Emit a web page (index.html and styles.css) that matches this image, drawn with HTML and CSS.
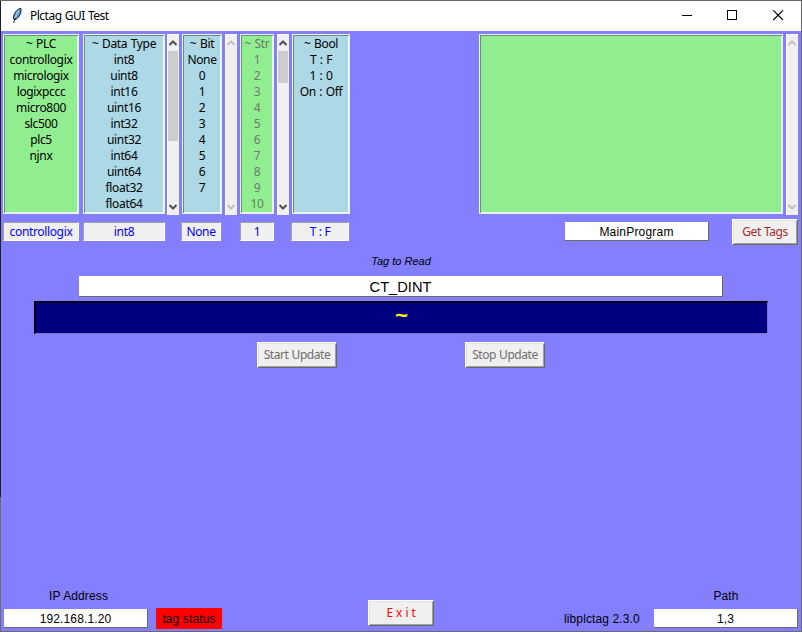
FILE: index.html
```html
<!DOCTYPE html>
<html lang="en">
<head>
<meta charset="utf-8">
<title>Plctag GUI Test</title>
<link rel="stylesheet" href="styles.css">
</head>
<body>
<div class="window">
  <header class="titlebar">
    <svg class="feather" width="12" height="18" viewBox="0 0 12 18">
      <path d="M9.800 1.200C5.500 2.500 2.600 6.500 2.400 11.500L3.600 13C7.400 11.500 11 6.500 9.800 1.200Z" fill="#5b93cc" stroke="#15191f" stroke-width="1"/>
      <path d="M8.300 3.200C6.300 5.200 5 8 4.400 10.600" fill="none" stroke="#a5d3f7" stroke-width="1.300"/>
      <path d="M4.400 11C3.600 12.600 3 14.200 2.600 16" fill="none" stroke="#20242b" stroke-width="1"/>
    </svg>
    <h1 class="title">Plctag GUI Test</h1>
    <svg class="controls" width="104" height="12" viewBox="0 0 104 12" fill="none" stroke="#000" stroke-width="1">
      <path d="M0 5.500H10M45.500 .5H54.500V9.500H45.500Z" shape-rendering="crispEdges"/>
      <path d="M91.300 .3L101 10M101 .3L91.300 10" stroke-width="1.100"/>
    </svg>
  </header>

  <main class="content">
    <section class="lists">
      <ul class="listbox green plc"><li>~ PLC</li><li>controllogix</li><li>micrologix</li><li>logixpccc</li><li>micro800</li><li>slc500</li><li>plc5</li><li>njnx</li></ul>
      <ul class="listbox blue dtype"><li>~ Data Type</li><li>int8</li><li>uint8</li><li>int16</li><li>uint16</li><li>int32</li><li>uint32</li><li>int64</li><li>uint64</li><li>float32</li><li>float64</li></ul>
      <div class="scroll scroll-dtype">
        <svg class="arrow" viewBox="0 0 10 6"><path d="M1.500 5L5 1.500L8.500 5"/></svg>
        <div class="thumb thumb-long"></div>
        <svg class="arrow down" viewBox="0 0 10 6"><path d="M1.500 1L5 4.500L8.500 1"/></svg>
      </div>
      <ul class="listbox blue bit"><li>~ Bit</li><li>None</li><li>0</li><li>1</li><li>2</li><li>3</li><li>4</li><li>5</li><li>6</li><li>7</li></ul>
      <div class="scroll off scroll-bit">
        <svg class="arrow" viewBox="0 0 10 6"><path d="M1.500 5L5 1.500L8.500 5"/></svg>
        <svg class="arrow down" viewBox="0 0 10 6"><path d="M1.500 1L5 4.500L8.500 1"/></svg>
      </div>
      <ul class="listbox green str disabled"><li>~ Str</li><li>1</li><li>2</li><li>3</li><li>4</li><li>5</li><li>6</li><li>7</li><li>8</li><li>9</li><li>10</li></ul>
      <div class="scroll scroll-str">
        <svg class="arrow" viewBox="0 0 10 6"><path d="M1.500 5L5 1.500L8.500 5"/></svg>
        <div class="thumb thumb-short"></div>
        <svg class="arrow down" viewBox="0 0 10 6"><path d="M1.500 1L5 4.500L8.500 1"/></svg>
      </div>
      <ul class="listbox blue bool"><li>~ Bool</li><li>T : F</li><li>1 : 0</li><li>On : Off</li></ul>
      <ul class="listbox green tags"></ul>
      <div class="scroll off scroll-tags">
        <svg class="arrow" viewBox="0 0 10 6"><path d="M1.500 5L5 1.500L8.500 5"/></svg>
        <svg class="arrow down" viewBox="0 0 10 6"><path d="M1.500 1L5 4.500L8.500 1"/></svg>
      </div>
    </section>

    <section class="selection">
      <div class="value v-plc">controllogix</div>
      <div class="value v-dtype">int8</div>
      <div class="value v-bit">None</div>
      <div class="value v-str">1</div>
      <div class="value v-bool">T : F</div>
      <div class="entry program">MainProgram</div>
      <button class="button get-tags">Get Tags</button>
    </section>

    <section class="reader">
      <div class="caption">Tag to Read</div>
      <div class="entry tag-name">CT_DINT</div>
      <div class="readout">~</div>
      <div class="actions">
        <button class="button" disabled>Start Update</button>
        <button class="button" disabled>Stop Update</button>
      </div>
    </section>

    <footer class="footer">
      <div class="field ip"><label>IP Address</label><div class="entry">192.168.1.20</div></div>
      <div class="status">tag status</div>
      <button class="button exit">E x i t</button>
      <div class="version">libplctag 2.3.0</div>
      <div class="field path"><label>Path</label><div class="entry">1,3</div></div>
    </footer>
  </main>
</div>
</body>
</html>
```

FILE: styles.css
```css
* { box-sizing: border-box; }
body {
  margin: 0;
  font: 12px/16px "Noto Sans", "Open Sans", sans-serif;
  color: #000;
}
.window {
  width: 802px;
  height: 632px;
  padding: 1px;
  background: linear-gradient(#1f1f22, #1f1f22) 0 1px / 1px 496px no-repeat, #6b6970;
  display: flex;
  flex-direction: column;
  overflow: hidden;
}
.titlebar {
  height: 30px;
  flex: none;
  background: #fff;
  display: flex;
  align-items: center;
  padding: 0 15px 0 10px;
}
.feather { margin-right: 7px; }
.title {
  margin: 0;
  font-size: 12px;
  font-weight: 400;
  letter-spacing: -0.5px;
  word-spacing: 0.5px;
}
.controls { margin: 0 0 0 auto; }
.content {
  flex: 1;
  background: #837fff;
  display: flex;
  flex-direction: column;
}
.lists { display: flex; padding: 3px 0 0 2px; height: 184px; }
.listbox {
  list-style: none;
  margin: 0;
  padding: 1px 0 0;
  height: 180px;
  border: 1px solid #e8f4ee;
  box-shadow: inset 1px 1px #6d8a80, inset -1px -1px #eefaf4;
  text-align: center;
  letter-spacing: -0.35px;
  word-spacing: 0.8px;
  white-space: nowrap;
}
.green { background: #90ee90; }
.blue { background: #add8e6; }
.disabled { color: #6d7a6d; }
.plc { width: 76px; }
.dtype { width: 82px; margin-left: 4px; }
.bit { width: 40px; margin-left: 3px; }
.str { width: 34px; margin-left: 3px; }
.bool { width: 58px; margin-left: 3px; }
.tags { width: 304px; margin-left: 129px; }
.scroll {
  width: 12px;
  height: 181px;
  background: #f0f0f0;
  border: solid #fff;
  border-width: 1px 0 0 1px;
  padding-right: 1px;
  display: flex;
  flex-direction: column;
}
.scroll-dtype { margin-left: 2px; }
.scroll-bit, .scroll-str, .scroll-tags { margin-left: 3px; }
.arrow {
  display: block;
  width: 10px;
  height: 6px;
  margin: 5px 0;
  fill: none;
  stroke: #505050;
  stroke-width: 2;
}
.off .arrow { stroke: #bfbfbf; }
.down { margin: auto 0 5px; }
.thumb { background: #cdcdcd; }
.thumb-long { height: 90px; }
.thumb-short { height: 32px; }

.selection { display: flex; align-items: center; padding-left: 2px; height: 31px; }
.value {
  height: 19px;
  margin-top: 1px;
  line-height: 18px;
  background: #f0f0f0;
  border: 1px solid;
  border-color: #a0a0a0 #fff #fff #a0a0a0;
  color: #00f;
  text-align: center;
  letter-spacing: -0.35px;
}
.v-plc { width: 76px; }
.v-dtype { width: 82px; margin-left: 4px; }
.v-bit { width: 40px; margin-left: 16px; }
.v-str { width: 34px; margin-left: 19px; color: #00c; }
.v-bool { width: 58px; margin-left: 17px; }
.entry {
  width: 144px;
  height: 19px;
  background: #fff;
  border: solid #696969;
  border-width: 0 1px 1px 0;
  font: 12px/20px "Liberation Sans", Arial, sans-serif;
  text-align: center;
}
.program { margin: 1px 0 0 216px; letter-spacing: 0.2px; }
.button {
  height: 26px;
  padding: 0;
  background: #f0f0f0;
  border: 1px solid;
  border-color: #fff #696969 #696969 #fff;
  box-shadow: inset 1px 1px #e3e3e3, inset -1px -1px #a0a0a0;
  color: #a52a2a;
  font: 12px/22px "Noto Sans", "Open Sans", sans-serif;
  letter-spacing: -0.45px;
  word-spacing: 0.5px;
  white-space: nowrap;
}
.button:disabled { color: #6d6d6d; }
.get-tags { width: 66px; margin: 2px 0 0 23px; }

.reader { display: flex; flex-direction: column; align-items: center; }
.caption {
  height: 30px;
  line-height: 30px;
  font-family: "Liberation Sans", Arial, sans-serif;
  font-size: 11px;
  font-style: italic;
}
.tag-name { width: 644px; height: 21px; font-size: 14.67px; line-height: 22px; }
.readout {
  width: 734px;
  height: 33px;
  margin-top: 4px;
  background: #000080;
  border: solid;
  border-width: 2px 1px 1px 2px;
  border-color: #000018 #7c79c0 #7c79c0 #000018;
  color: #ff0;
  font: 600 23px/24px "Noto Sans", sans-serif;
  text-align: center;
}
.actions { display: flex; gap: 128px; margin-top: 8px; }
.actions .button { width: 80px; }

.footer {
  margin-top: auto;
  display: flex;
  align-items: flex-end;
  padding: 0 3px 3px;
  font-family: "Liberation Sans", Arial, sans-serif;
  letter-spacing: 0.12px;
}
.field { display: flex; flex-direction: column; align-items: center; }
.field label { height: 21px; line-height: 16px; padding-left: 5px; }
.path label { padding-left: 0; }
.status {
  width: 66px;
  height: 21px;
  margin: 0 0 -1px 8px;
  background: #f00;
  line-height: 22px;
  text-align: center;
}
.exit { width: 66px; margin: 0 0 2px 146px; color: #f00; letter-spacing: -0.3px; }
.version { margin-left: 130px; width: 90px; line-height: 18px; }
```
